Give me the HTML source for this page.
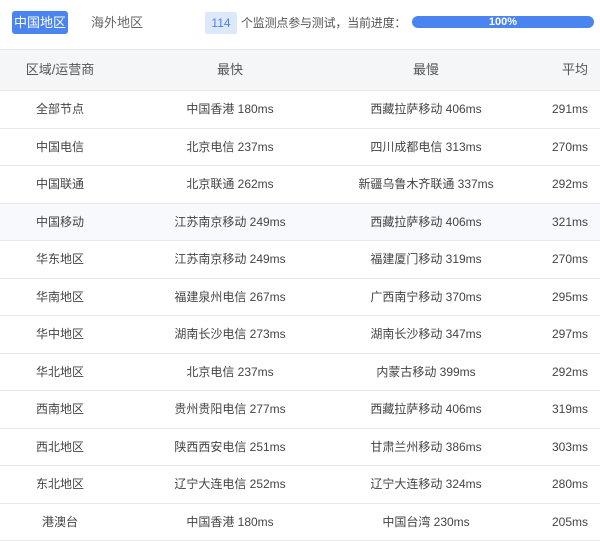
<!DOCTYPE html><html><head><meta charset="utf-8"><style>
body{margin:0;width:600px;height:540px;overflow:hidden;background:#fff;font-family:"Liberation Sans","Noto Sans CJK SC",sans-serif;color:#444;font-size:12px}
.tab{position:absolute;top:11px;height:23px;line-height:23px;font-size:13px}
.t1{left:12px;width:56px;background:#4a84f0;color:#fff;border-radius:3px;text-align:center}
.t2{left:91px;color:#666}
.badge{position:absolute;left:205px;top:12px;width:32px;height:22px;line-height:22px;background:#dde8fb;color:#4a84f0;text-align:center;border-radius:2px;font-size:12px}
.info{position:absolute;left:241px;top:12px;line-height:22px;font-size:12px;color:#555;letter-spacing:-0.2px}
.bar{position:absolute;left:412px;top:16px;width:182px;height:12px;background:#4a84f0;border-radius:6px;color:#fff;font-size:11px;line-height:12px;text-align:center;font-weight:bold}
table{position:absolute;top:49px;left:0;width:600px;border-collapse:collapse}
td,th{height:36.5px;border-bottom:1px solid #e8e8e8;font-weight:normal;padding:0;text-align:center;vertical-align:middle;line-height:16px}
th{height:40px;background:#f5f6f7;font-size:13px;color:#555;border-top:1px solid #e8e8e8}
tr.h td{background:#f7f9fd}
td:last-child,th:last-child{text-align:right;padding-right:12px}
</style></head><body>
<div class="tab t1">中国地区</div><div class="tab t2">海外地区</div>
<div class="badge">114</div><div class="info">个监测点参与测试，当前进度：</div>
<div class="bar">100%</div>
<table>
<colgroup><col style="width:120px"><col style="width:220px"><col style="width:172px"><col></colgroup>
<tr><th>区域/运营商</th><th>最快</th><th>最慢</th><th>平均</th></tr>
<tr><td>全部节点</td><td>中国香港 180ms</td><td>西藏拉萨移动 406ms</td><td>291ms</td></tr>
<tr><td>中国电信</td><td>北京电信 237ms</td><td>四川成都电信 313ms</td><td>270ms</td></tr>
<tr><td>中国联通</td><td>北京联通 262ms</td><td>新疆乌鲁木齐联通 337ms</td><td>292ms</td></tr>
<tr class="h"><td>中国移动</td><td>江苏南京移动 249ms</td><td>西藏拉萨移动 406ms</td><td>321ms</td></tr>
<tr><td>华东地区</td><td>江苏南京移动 249ms</td><td>福建厦门移动 319ms</td><td>270ms</td></tr>
<tr><td>华南地区</td><td>福建泉州电信 267ms</td><td>广西南宁移动 370ms</td><td>295ms</td></tr>
<tr><td>华中地区</td><td>湖南长沙电信 273ms</td><td>湖南长沙移动 347ms</td><td>297ms</td></tr>
<tr><td>华北地区</td><td>北京电信 237ms</td><td>内蒙古移动 399ms</td><td>292ms</td></tr>
<tr><td>西南地区</td><td>贵州贵阳电信 277ms</td><td>西藏拉萨移动 406ms</td><td>319ms</td></tr>
<tr><td>西北地区</td><td>陕西西安电信 251ms</td><td>甘肃兰州移动 386ms</td><td>303ms</td></tr>
<tr><td>东北地区</td><td>辽宁大连电信 252ms</td><td>辽宁大连移动 324ms</td><td>280ms</td></tr>
<tr><td>港澳台</td><td>中国香港 180ms</td><td>中国台湾 230ms</td><td>205ms</td></tr>
</table>
</body></html>
